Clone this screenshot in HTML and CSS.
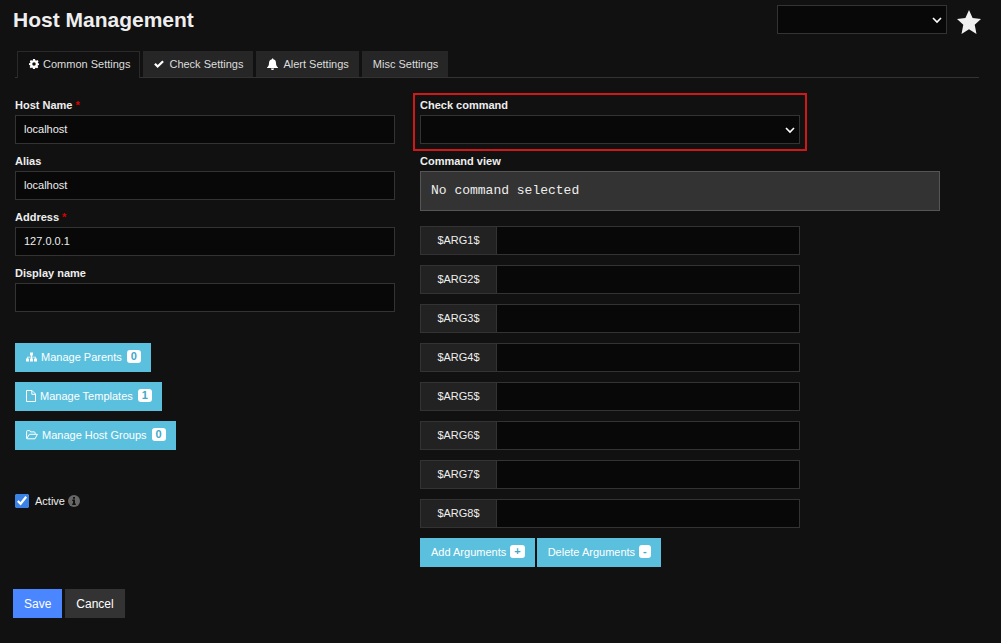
FILE: index.html
```
<!DOCTYPE html>
<html lang="en">
<head>
    <meta charset="UTF-8">
    <meta name="viewport" content="width=device-width, initial-scale=1.0">
    <title>Host Management</title>
    <link rel="stylesheet" href="styles.css">
</head>
<body>

    <header class="page-header">
        <h1>Host Management</h1>
        <div class="header-tools">
            <select class="form-control host-select" aria-label="Host">
                <option></option>
            </select>
            <button type="button" class="star-btn" aria-label="Favorite">
                <svg width="24" height="24" viewBox="0 0 24 24"><path fill="currentColor" d="M12 0l3.6 8.1 8.4.9-6.3 5.8L19.5 24 12 19.3 4.5 24l1.8-9.2L0 9l8.4-.9z"/></svg>
            </button>
        </div>
    </header>

    <nav class="tabs">
        <a href="#common" class="tab active">
            <svg width="10" height="10" viewBox="0 0 20 20"><path fill="currentColor" fill-rule="evenodd" d="M8 0h4l.6 2.7 1.6.7L16.600 2l2.400 2.600-1.400 2.300.6 1.500L20 9v3l-2.200.6-.6 1.400 1.300 2.400-2.400 2.300-2.300-1.300-1.400.6L12 20H8l-.6-2.200-1.400-.6-2.400 1.300-2.300-2.400L2.700 14l-.6-1.400L0 12V8.500l2.200-.5.6-1.400L1.500 4.300 4 2l2.200 1.400 1.300-.6zM10 6.500a3.500 3.500 0 100 7 3.500 3.500 0 000-7z"/></svg>
            Common Settings
        </a>
        <a href="#check" class="tab">
            <svg width="10" height="10" viewBox="0 0 22 20"><path fill="none" stroke="currentColor" stroke-width="5" d="M2 9.500l6 6L20 4"/></svg>
            Check Settings
        </a>
        <a href="#alert" class="tab">
            <svg width="11" height="12" viewBox="0 0 22 24"><path fill="currentColor" d="M10 1.500a1.300 1.300 0 012.500 0v1.200c4 .8 5.500 3.800 5.500 7.300 0 5 1.500 7 4 9v1H0v-1c2.500-2 4-4 4-9 0-3.500 2-6.500 6-7.300zM8 21h6c0 4-6 4-6 0z"/></svg>
            Alert Settings
        </a>
        <a href="#misc" class="tab">Misc Settings</a>
    </nav>

    <form>
        <div class="columns">
            <div class="column">
                <div class="form-group">
                    <label for="host-name">Host Name <span class="req">*</span></label>
                    <input type="text" id="host-name" class="form-control" value="localhost">
                </div>
                <div class="form-group">
                    <label for="alias">Alias</label>
                    <input type="text" id="alias" class="form-control" value="localhost">
                </div>
                <div class="form-group">
                    <label for="address">Address <span class="req">*</span></label>
                    <input type="text" id="address" class="form-control" value="127.0.0.1">
                </div>
                <div class="form-group">
                    <label for="display-name">Display name</label>
                    <input type="text" id="display-name" class="form-control">
                </div>

                <div class="manage">
                    <button type="button" class="btn btn-info">
                        <svg width="11" height="10" viewBox="0 0 22 20"><path fill="currentColor" d="M8 1h6v6h-2v2.500h7.500V13H22v6h-6v-6h2v-2h-6v2h2v6H8v-6h2v-2H4v2h2v6H0v-6h2.500V9.500H10V7H8z"/></svg>
                        Manage Parents <span class="badge">0</span>
                    </button>
                    <button type="button" class="btn btn-info">
                        <svg width="10" height="12" viewBox="0 0 10 12"><path fill="none" stroke="currentColor" d="M.5.5h5.500l3.500 3.500v7.500h-9zM5.800.5v3.800h3.700"/></svg>
                        Manage Templates <span class="badge">1</span>
                    </button>
                    <button type="button" class="btn btn-info">
                        <svg width="12" height="10" viewBox="0 0 12 10"><path fill="none" stroke="currentColor" stroke-linejoin="round" d="M.6 8V1.500q0-.9.9-.9h2q.9 0 .9 1.300h3.800q.9 0 .9 1v1M.8 8.600l2.600-4.300h8l-2.400 4.500H1.200q-.6 0-.6-.8"/></svg>
                        Manage Host Groups <span class="badge">0</span>
                    </button>
                </div>

                <div class="checkbox">
                    <input type="checkbox" id="active" checked>
                    <label for="active">Active</label>
                    <svg class="info" width="12" height="12" viewBox="0 0 12 12"><circle cx="6" cy="6" r="6" fill="currentColor"/><path fill="#111" d="M5 2h2v1.700H5zM4.200 4.600H7v4h.8V10H4.200V8.600H5V6h-.8z"/></svg>
                </div>
            </div>

            <div class="column">
                <div class="form-group highlight">
                    <label for="check-command">Check command</label>
                    <select id="check-command" class="form-control">
                        <option></option>
                    </select>
                </div>
                <div class="form-group">
                    <h2>Command view</h2>
                    <pre>No command selected</pre>
                </div>

                <div class="args">
                    <div class="input-group">
                        <label for="arg1">$ARG1$</label>
                        <input type="text" id="arg1" class="form-control">
                    </div>
                    <div class="input-group">
                        <label for="arg2">$ARG2$</label>
                        <input type="text" id="arg2" class="form-control">
                    </div>
                    <div class="input-group">
                        <label for="arg3">$ARG3$</label>
                        <input type="text" id="arg3" class="form-control">
                    </div>
                    <div class="input-group">
                        <label for="arg4">$ARG4$</label>
                        <input type="text" id="arg4" class="form-control">
                    </div>
                    <div class="input-group">
                        <label for="arg5">$ARG5$</label>
                        <input type="text" id="arg5" class="form-control">
                    </div>
                    <div class="input-group">
                        <label for="arg6">$ARG6$</label>
                        <input type="text" id="arg6" class="form-control">
                    </div>
                    <div class="input-group">
                        <label for="arg7">$ARG7$</label>
                        <input type="text" id="arg7" class="form-control">
                    </div>
                    <div class="input-group">
                        <label for="arg8">$ARG8$</label>
                        <input type="text" id="arg8" class="form-control">
                    </div>
                    <div class="arg-buttons">
                        <button type="button" class="btn btn-info">Add Arguments <span class="badge">+</span></button>
                        <button type="button" class="btn btn-info">Delete Arguments <span class="badge">-</span></button>
                    </div>
                </div>
            </div>
        </div>

        <div class="actions">
            <button type="submit" class="btn btn-save">Save</button>
            <button type="button" class="btn btn-cancel">Cancel</button>
        </div>
    </form>

</body>
</html>
```
FILE: styles.css
```
* {
    box-sizing: border-box;
}

body {
    margin: 0;
    padding: 5px 20px 25px 13px;
    background: #111;
    color: #eee;
    font-family: "Liberation Sans", Arial, sans-serif;
    font-size: 11px;
    line-height: 16px;
}

/* Header */
.page-header {
    display: flex;
    justify-content: space-between;
    align-items: flex-start;
}

h1 {
    margin: 0;
    font-size: 21px;
    line-height: 30px;
}

.header-tools {
    display: flex;
    gap: 10px;
}

.star-btn {
    height: 34px;
    padding: 5px 0;
    border: 0;
    background: none;
    color: #f0f0f0;
    cursor: pointer;
}

.star-btn svg {
    display: block;
}

/* Tabs */
.tabs {
    display: flex;
    gap: 3px;
    margin: 12px 2px 0;
    padding-left: 2px;
    border-bottom: 1px solid #333;
}

.tab {
    display: flex;
    align-items: center;
    gap: 5px;
    height: 26px;
    padding: 0 9px 1px 10px;
    border: 1px solid #262626;
    border-bottom: 0;
    background: #262626;
    color: #ddd;
    text-decoration: none;
    white-space: nowrap;
}

.tab.active {
    gap: 4px;
    height: 27px;
    margin-bottom: -1px;
    padding: 0 9px 2px 11px;
    border-color: #2a2a2a;
    background: #111;
}

.tab svg {
    color: #fff;
}

/* Form */
.columns {
    display: grid;
    grid-template-columns: minmax(0, 380px) minmax(0, 520px);
    gap: 25px;
    padding: 19px 2px 0;
}

.form-group {
    max-width: 520px;
    margin-bottom: 9px;
}

.form-group label,
.form-group h2 {
    display: block;
    margin: 0 0 2px;
    font-size: 11px;
    font-weight: bold;
    line-height: 16px;
}

.req {
    color: #d00;
}

.form-control {
    display: block;
    width: 100%;
    height: 29px;
    padding: 0 8px 2px;
    border: 1px solid #333;
    border-radius: 0;
    background: #080808;
    color: #eee;
    font: inherit;
}

/* Selects draw their own thin chevron */
select.form-control {
    appearance: none;
    padding: 0 18px 0 8px;
    background: #080808 url("data:image/svg+xml,%3Csvg xmlns='http://www.w3.org/2000/svg' width='10' height='8'%3E%3Cpath d='M1 2l4 4 4-4' fill='none' stroke='%23fff' stroke-width='1.6'/%3E%3C/svg%3E") no-repeat right 4px center;
}

.header-tools .host-select {
    width: 170px;
}

.highlight {
    max-width: 394px;
    margin: -4px -7px 2px;
    padding: 2px 5px 5px;
    border: 2px solid #d01818;
}

pre {
    margin: 0;
    padding: 10px;
    border: 1px solid #555;
    background: #333;
    font-family: "Liberation Mono", "Courier New", monospace;
    font-size: 13px;
    line-height: 18px;
}

/* Buttons */
.btn {
    display: flex;
    align-items: center;
    gap: 4px;
    height: 29px;
    padding: 0 11px;
    border: 0;
    color: #fff;
    font: inherit;
    white-space: nowrap;
    cursor: pointer;
}

.btn-info {
    padding: 0 10px 2px 11px;
    background: #5bc0de;
}

.badge {
    padding: 0 4px;
    border-radius: 3px;
    background: #fff;
    color: #3fa9c9;
    font-size: 11px;
    font-weight: bold;
    line-height: 13px;
    text-align: center;
}

.manage {
    display: flex;
    flex-direction: column;
    align-items: flex-start;
    gap: 10px;
    margin-top: 31px;
}

.manage .badge {
    margin-left: 1px;
}

.checkbox {
    display: flex;
    align-items: center;
    margin-top: 43px;
}

.checkbox input {
    width: 14px;
    height: 14px;
    margin: 0 6px 0 0;
    accent-color: #3b82e6;
}

.info {
    margin-left: 3px;
    color: #666;
}

/* Arguments */
.args {
    display: flex;
    flex-direction: column;
    gap: 10px;
    max-width: 380px;
    margin-top: 15px;
}

.input-group {
    display: flex;
}

.input-group label {
    flex: none;
    width: 76px;
    border: 1px solid #333;
    border-right: 0;
    background: #222;
    line-height: 27px;
    text-align: center;
}

.arg-buttons {
    display: flex;
    gap: 2px;
}

.actions {
    display: flex;
    gap: 3px;
    margin-top: 22px;
    font-size: 12px;
}

.btn-save {
    background: #4a86ff;
}

.btn-cancel {
    background: #333;
}
```
